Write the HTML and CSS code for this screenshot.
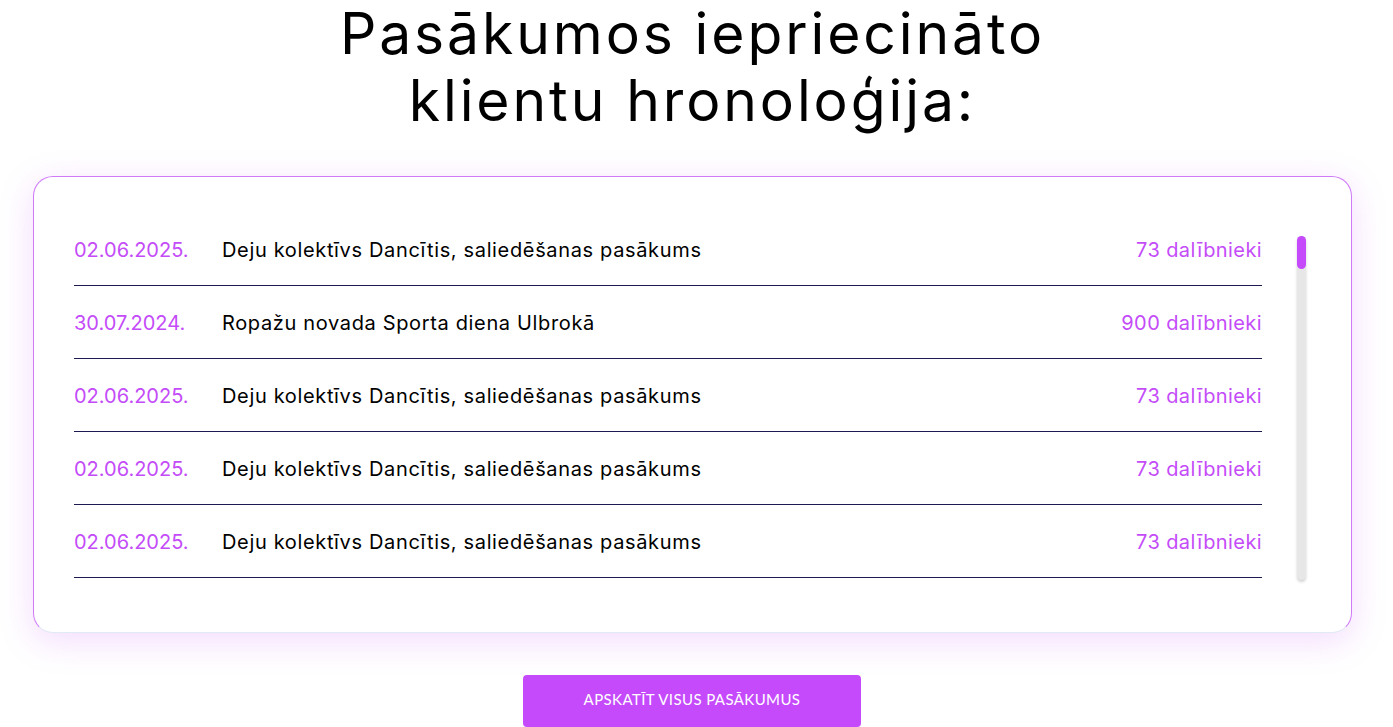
FILE: index.html
```html
<!DOCTYPE html>
<html lang="lv">
<head>
<meta charset="utf-8">
<title>Pasākumos iepriecināto klientu hronoloģija</title>
<link rel="stylesheet" href="styles.css">
</head>
<body>
<main class="page">
  <h1 class="title">Pasākumos iepriecināto<br>klientu hronoloģija:</h1>
  <section class="card">
    <ul class="events">
      <li class="event"><span class="date">02.06.2025.</span><span class="name">Deju kolektīvs Dancītis, saliedēšanas pasākums</span><span class="count">73 dalībnieki</span></li>
      <li class="event"><span class="date">30.07.2024.</span><span class="name">Ropažu novada Sporta diena Ulbrokā</span><span class="count">900 dalībnieki</span></li>
      <li class="event"><span class="date">02.06.2025.</span><span class="name">Deju kolektīvs Dancītis, saliedēšanas pasākums</span><span class="count">73 dalībnieki</span></li>
      <li class="event"><span class="date">02.06.2025.</span><span class="name">Deju kolektīvs Dancītis, saliedēšanas pasākums</span><span class="count">73 dalībnieki</span></li>
      <li class="event"><span class="date">02.06.2025.</span><span class="name">Deju kolektīvs Dancītis, saliedēšanas pasākums</span><span class="count">73 dalībnieki</span></li>
    </ul>
    <div class="scrollbar"><div class="thumb"></div></div>
  </section>
  <div class="actions"><a class="btn" href="#">Apskatīt visus pasākumus</a></div>
</main>
</body>
</html>
```

FILE: styles.css
```css
* { box-sizing: border-box; }
html, body { margin: 0; padding: 0; background: #fff; }
body { font-family: "Inter", "Noto Sans", sans-serif; color: #000; overflow: hidden; }
.page { width: 1385px; }
.title {
  margin: 0;
  text-align: center;
  font-weight: 400;
  font-size: 57px;
  line-height: 67px;
  letter-spacing: 2.9px;
  color: #000;
}
.card {
  margin: 42px 33px 0;
  height: 457px;
  background: #fff;
  border: 1px solid #d07af8;
  border-bottom-color: #e2eaf6;
  border-radius: 20px;
  box-shadow: 0 8px 34px rgba(200, 90, 245, 0.22);
  display: flex;
  align-items: flex-start;
  padding: 36px 45px 0 40px;
}
.events { list-style: none; margin: 0; padding: 0; flex: 1; }
.event {
  display: flex;
  align-items: center;
  height: 73px;
  padding-top: 2px;
  border-bottom: 1px solid #1d1a52;
  font-size: 20px;
}
.date { width: 148px; color: #c44cf8; }
.name { flex: 1; color: #000; letter-spacing: 0.65px; }
.count { color: #c44cf8; letter-spacing: 0.4px; }
.scrollbar {
  width: 9px;
  height: 344px;
  margin: 23px 0 0 35px;
  background: #e7e7e7;
  border-radius: 5px;
  box-shadow: 0 2px 3px rgba(0,0,0,0.18);
}
.thumb { height: 33px; background: #c54afc; border-radius: 5px; }
.actions { display: flex; justify-content: center; margin-top: 42px; }
.btn {
  display: flex;
  align-items: center;
  justify-content: center;
  width: 338px;
  height: 52px;
  margin-right: 1px;
  padding-bottom: 4px;
  background: #c54afc;
  border-radius: 4px;
  color: #fff;
  text-decoration: none;
  text-transform: uppercase;
  font-family: "Lato", sans-serif;
  font-size: 15px;
  font-weight: 400;
  letter-spacing: 0.4px;
}
```
